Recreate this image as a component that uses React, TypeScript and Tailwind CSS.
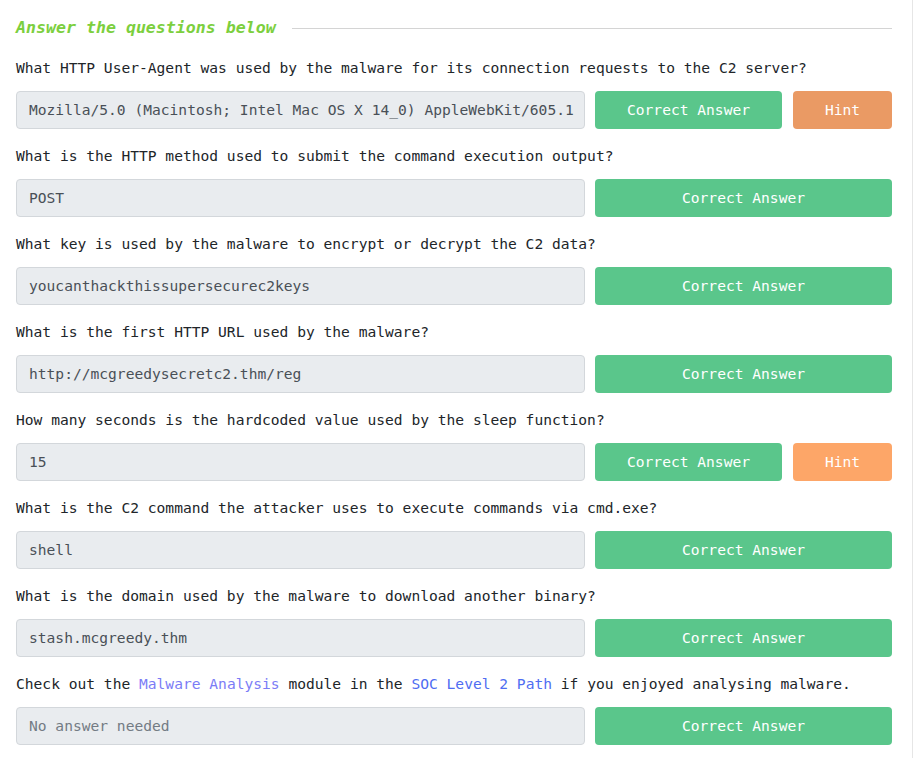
import React from 'react';

type Question = {
  q: React.ReactNode;
  answer: string;
  hint?: 'dark' | 'light';
  placeholder?: boolean;
};

const questions: Question[] = [
  {
    q: 'What HTTP User-Agent was used by the malware for its connection requests to the C2 server?',
    answer: 'Mozilla/5.0 (Macintosh; Intel Mac OS X 14_0) AppleWebKit/605.1',
    hint: 'dark',
  },
  { q: 'What is the HTTP method used to submit the command execution output?', answer: 'POST' },
  { q: 'What key is used by the malware to encrypt or decrypt the C2 data?', answer: 'youcanthackthissupersecurec2keys' },
  { q: 'What is the first HTTP URL used by the malware?', answer: 'http://mcgreedysecretc2.thm/reg' },
  { q: 'How many seconds is the hardcoded value used by the sleep function?', answer: '15', hint: 'light' },
  { q: 'What is the C2 command the attacker uses to execute commands via cmd.exe?', answer: 'shell' },
  { q: 'What is the domain used by the malware to download another binary?', answer: 'stash.mcgreedy.thm' },
  {
    q: (
      <>
        Check out the <span className="text-[#7b7cf6]">Malware Analysis</span> module in the{' '}
        <span className="text-[#4f6df2]">SOC Level 2 Path</span> if you enjoyed analysing malware.
      </>
    ),
    answer: 'No answer needed',
    placeholder: true,
  },
];

export default function App() {
  return (
    <div
      className="w-[913px] min-h-[758px] bg-white border-r border-[#e6e6e6]"
      style={{ fontFamily: '"DejaVu Sans Mono", "Liberation Mono", monospace' }}
    >
      <div className="pl-4 pr-[20px] pt-4">
        <div className="flex items-center gap-4 h-6 mb-[16px]">
          <h3 className="text-[16.6px] font-bold italic text-[#7ccf3e] whitespace-nowrap leading-6">
            Answer the questions below
          </h3>
          <div className="flex-1 h-px bg-[#d4d4d4]" />
        </div>

        {questions.map((item, i) => (
          <div key={i} className="mb-[15px]">
            <p className="text-[14.6px] leading-6 text-[#212529] mb-[11px] whitespace-nowrap">{item.q}</p>
            <div className="flex gap-[10px]">
              <div
                className={`w-[569px] h-[38px] shrink-0 flex items-center px-3 rounded bg-[#e9ecef] border border-[#d3d7db] text-[14.6px] whitespace-nowrap overflow-hidden ${
                  item.placeholder ? 'text-[#737b84]' : 'text-[#495057]'
                }`}
              >
                {item.answer}
              </div>
              <button className="flex-1 h-[38px] rounded bg-[#5ac68b] text-white text-[14.6px] font-medium">
                Correct Answer
              </button>
              {item.hint && (
                <button
                  className={`w-[99px] ml-px h-[38px] rounded text-white text-[14.6px] font-medium ${
                    item.hint === 'dark' ? 'bg-[#ea9a64]' : 'bg-[#fda668]'
                  }`}
                >
                  Hint
                </button>
              )}
            </div>
          </div>
        ))}
      </div>
    </div>
  );
}
